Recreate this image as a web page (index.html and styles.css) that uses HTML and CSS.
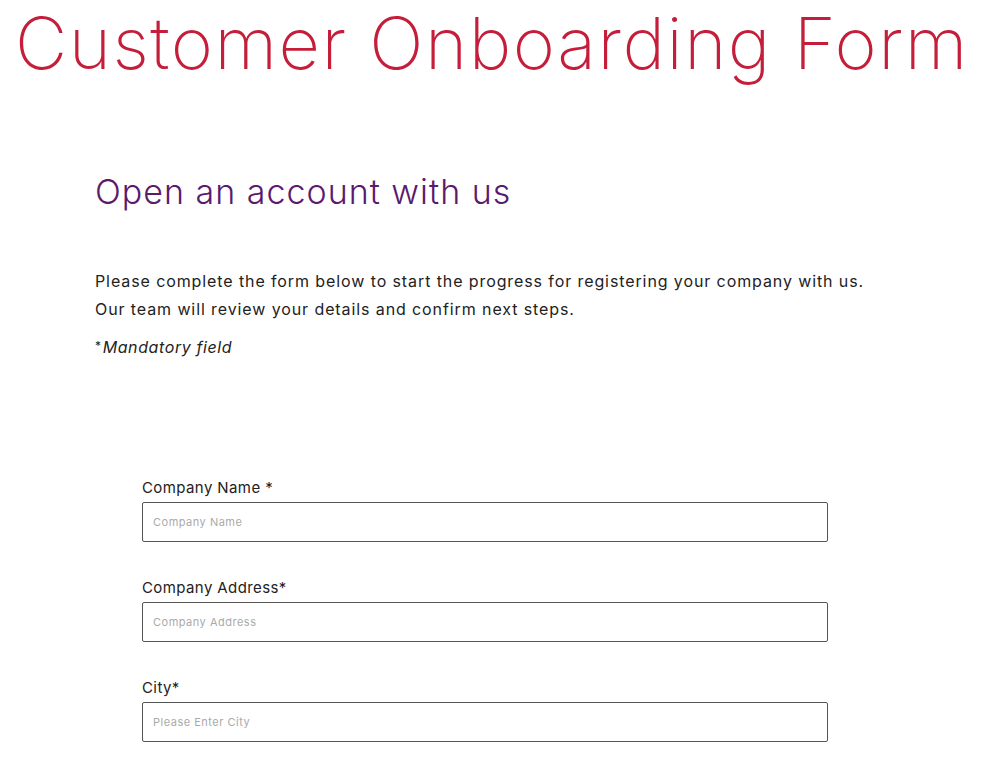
FILE: index.html
```html
<!DOCTYPE html>
<html lang="en">
<head>
<meta charset="utf-8">
<title>Customer Onboarding Form</title>
<link rel="stylesheet" href="styles.css">
</head>
<body>
<h1 class="page-title">Customer Onboarding Form</h1>
<section class="intro">
  <h2 class="intro-heading">Open an account with us</h2>
  <p class="intro-text">Please complete the form below to start the progress for registering your company with us.<br>Our team will review your details and confirm next steps.</p>
  <p class="mandatory"><span class="star">*</span><em>Mandatory field</em></p>
</section>
<form class="form">
  <div class="field">
    <label class="field-label" for="company">Company Name *</label>
    <input class="field-input" id="company" type="text" placeholder="Company Name">
  </div>
  <div class="field">
    <label class="field-label" for="address">Company Address*</label>
    <input class="field-input" id="address" type="text" placeholder="Company Address">
  </div>
  <div class="field">
    <label class="field-label" for="city">City*</label>
    <input class="field-input" id="city" type="text" placeholder="Please Enter City">
  </div>
</form>
</body>
</html>
```
FILE: styles.css
```css
html, body {
  margin: 0;
  padding: 0;
  background: #fff;
}
body {
  font-family: Inter, "Liberation Sans", sans-serif;
  color: #222;
}
.page-title {
  margin: 0;
  padding: 0 0 0 15px;
  height: 100px;
  font-weight: 200;
  font-size: 72px;
  line-height: 86px;
  letter-spacing: 1.5px;
  color: #c41e3a;
  white-space: nowrap;
}
.intro {
  padding: 70px 0 0 95px;
}
.intro-heading {
  margin: 0;
  font-weight: 300;
  font-size: 34px;
  line-height: 44px;
  letter-spacing: 1px;
  color: #5a1a6e;
}
.intro-text {
  margin: 53px 0 0;
  font-size: 16px;
  line-height: 28px;
  letter-spacing: 0.9px;
}
.mandatory {
  margin: 13px 0 0;
  font-size: 16px;
  line-height: 20px;
  letter-spacing: 0.6px;
}
.star {
  font-size: 12px;
  vertical-align: 3px;
  margin-right: 1px;
}
.form {
  padding: 121px 0 0 142px;
  width: 686px;
}
.field {
  display: flex;
  flex-direction: column;
  gap: 4px;
  margin-bottom: 36px;
}
.field-label {
  font-size: 15px;
  line-height: 20px;
  letter-spacing: 0.4px;
  color: #222;
}
.field-input {
  box-sizing: border-box;
  height: 40px;
  width: 686px;
  border: 1px solid #555;
  border-radius: 2px;
  padding: 0 10px;
  font-family: inherit;
  font-size: 11px;
  letter-spacing: 0.5px;
}
.field-input::placeholder {
  color: #aaa;
}
```
